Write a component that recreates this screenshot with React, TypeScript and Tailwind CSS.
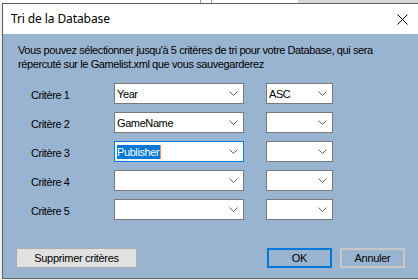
import { Fragment } from "react"

const font = "font-['Liberation_Sans',Arial,sans-serif]"

function Chevron() {
  return (
    <svg width="9" height="5" viewBox="0 0 9 5" className="shrink-0">
      <path d="M0.5 0.5 L4.5 4.5 L8.5 0.5" fill="none" stroke="#606060" strokeWidth="1" />
    </svg>
  )
}

function Combo({ value, width, focused, selected }: { value?: string; width: string; focused?: boolean; selected?: boolean }) {
  return (
    <div
      className={`${width} h-[21px] bg-white border flex items-center pl-[2px] pr-[5px] ${
        focused ? "border-[#0078d7]" : "border-[#7a7a7a]"
      }`}
    >
      <div className="flex-1 min-w-0 flex">
        {value && (
          <span
            className={`text-[11px] leading-[14px] tracking-[-0.4px] h-[14px] ${
              selected ? "bg-[#0078d7] text-white pr-[1px] border-r border-[#ff8c3a]" : "text-black"
            }`}
          >
            {value}
          </span>
        )}
      </div>
      <Chevron />
    </div>
  )
}

export default function App() {
  const rows = [
    { label: "Critère 1", main: "Year", order: "ASC" },
    { label: "Critère 2", main: "GameName" },
    { label: "Critère 3", main: "Publisher", focused: true },
    { label: "Critère 4" },
    { label: "Critère 5" },
  ]

  return (
    <div className={`relative w-[418px] h-[280px] overflow-hidden bg-[#f0f0f0] ${font}`}>
      {/* app behind the dialog */}
      <div className="absolute left-0 top-0 w-full h-[4px] bg-white" />
      <div className="absolute left-[200px] top-0 w-px h-[4px] bg-[#a0a0a0]" />
      <div className="absolute left-[211px] top-0 w-px h-[4px] bg-[#a0a0a0]" />
      <div className="absolute left-[298px] top-0 w-[120px] h-[4px] bg-[#d8d8d8]" />

      {/* dialog window */}
      <div className="absolute left-[2px] top-[3px] w-[420px] h-[276px] border border-[#5f5f5f] flex flex-col">
        <div className="h-[30px] bg-white flex items-center justify-between pl-[8px] pr-[10px] shrink-0">
          <span className="text-[12px] text-black font-['Noto_Sans',sans-serif] tracking-[-0.1px]">Tri de la Database</span>
          <svg width="11" height="11" viewBox="0 0 11 11" className="mr-[3px]">
            <path d="M0.5 0.5 L10.5 10.5 M10.5 0.5 L0.5 10.5" stroke="#000" strokeWidth="1" />
          </svg>
        </div>

        <div className="flex-1 bg-[#99b4d1] pl-[15px] pt-[9px] text-black flex flex-col">
          <p className="text-[11px] leading-[14px] tracking-[-0.4px] w-[395px]">
            Vous pouvez sélectionner jusqu'à 5 critères de tri pour votre Database, qui sera
            <br />
            répercuté sur le Gamelist.xml que vous sauvegarderez
          </p>

          <div className="mt-[12px] grid grid-cols-[61px_130px_67px] gap-x-[22px] gap-y-[8px] auto-rows-[21px] pl-[13px]">
            {rows.map((r) => (
              <Fragment key={r.label}>
                <div className="text-[11px] tracking-[-0.4px] flex items-center pt-[4px] whitespace-nowrap">{r.label}</div>
                <Combo width="w-[130px]" value={r.main} focused={r.focused} selected={r.focused} />
                <Combo width="w-[67px]" value={r.order} />
              </Fragment>
            ))}
          </div>

          <div className="mt-[28px] flex items-center text-[11px] tracking-[-0.3px]">
            <button className="w-[121px] h-[20px] bg-[#e1e1e1] border border-[#adadad] -ml-[2px] flex items-center justify-center">
              Supprimer critères
            </button>
            <button className="ml-[130px] w-[65px] h-[20px] border-2 border-[#0078d7] bg-[#99b4d1] flex items-center justify-center">
              OK
            </button>
            <button className="ml-[8px] w-[65px] h-[20px] border-2 border-[#c8c8c8] bg-[#99b4d1] flex items-center justify-center">
              Annuler
            </button>
          </div>
        </div>
      </div>
    </div>
  )
}
